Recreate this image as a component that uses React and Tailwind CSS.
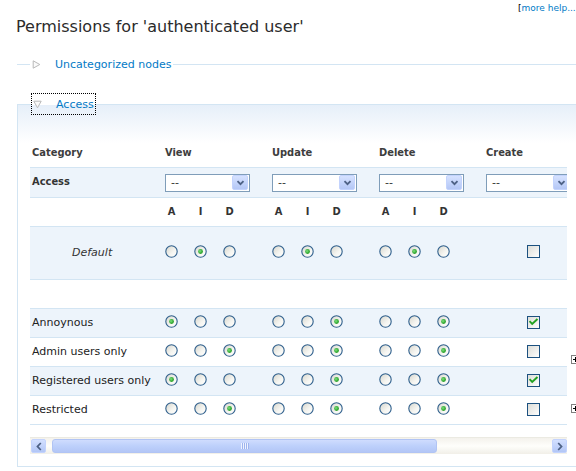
import React from 'react';

const rows = [
  { name: 'Annoynous', view: 0, create: true, odd: true },
  { name: 'Admin users only', view: 2, create: false, odd: false },
  { name: 'Registered users only', view: 0, create: true, odd: true },
  { name: 'Restricted', view: 2, create: false, odd: false },
];

const Radio = ({ checked }) => (
  <svg width="13" height="13" viewBox="0 0 13 13" className="block shrink-0">
    <defs>
      <linearGradient id="radioFill" x1="0" y1="0" x2="1" y2="1">
        <stop offset="0" stopColor="#d6d5cc" />
        <stop offset="0.6" stopColor="#f6f6f2" />
        <stop offset="1" stopColor="#ffffff" />
      </linearGradient>
      <radialGradient id="radioDot" cx="0.4" cy="0.4" r="0.6">
        <stop offset="0" stopColor="#7fe07f" />
        <stop offset="1" stopColor="#1d9a1d" />
      </radialGradient>
    </defs>
    <circle cx="6.5" cy="6.5" r="5.7" fill="url(#radioFill)" stroke="#2f5f8c" strokeWidth="1.1" />
    {checked && <circle cx="6.5" cy="6.5" r="2.4" fill="url(#radioDot)" />}
  </svg>
);

const Checkbox = ({ checked }) => (
  <svg width="13" height="13" viewBox="0 0 13 13" className="block shrink-0">
    <defs>
      <linearGradient id="boxFill" x1="0" y1="0" x2="1" y2="1">
        <stop offset="0" stopColor="#dcdcd6" />
        <stop offset="1" stopColor="#ffffff" />
      </linearGradient>
    </defs>
    <rect x="0.5" y="0.5" width="12" height="12" fill="url(#boxFill)" stroke="#1c5180" />
    {checked && (
      <path d="M3.2 5.8 L5.2 8 L9.8 3.6" stroke="#21a121" strokeWidth="1.9" fill="none" strokeLinecap="square" />
    )}
  </svg>
);

const Select = () => (
  <div className="flex h-[18px] w-[85px] shrink-0 items-center justify-between border border-[#7f9db9] bg-white pl-[5px] pr-[1px]">
    <span className="text-[11px] leading-none text-[#333]">--</span>
    <div className="flex h-[15px] w-[16px] items-center justify-center rounded-[2px] border border-[#c3d3fd] bg-gradient-to-b from-[#d6e2ff] to-[#b4c7f6]">
      <svg width="9" height="6" viewBox="0 0 9 6">
        <path d="M1.5 1.2 L4.5 4.2 L7.5 1.2" stroke="#4d6185" strokeWidth="1.8" fill="none" />
      </svg>
    </div>
  </div>
);

const RadioGroup = ({ value }) => (
  <div className="mb-[4px] flex w-[107px] shrink-0 gap-[16px]">
    {[0, 1, 2].map((i) => (
      <Radio key={i} checked={i === value} />
    ))}
  </div>
);

const Legend = ({ label, open }) => (
  <legend
    className={`ml-[1px] flex h-[22px] items-center border pl-[1px] pr-[1px] ${
      open ? 'border-dotted border-black' : 'border-transparent'
    }`}
  >
    <svg width="9" height="9" viewBox="0 0 9 9" className="mr-[14px]">
      {open ? (
        <path d="M0.8 1.2 H8.2 L4.5 7.8 Z" fill="#fafafa" stroke="#b9b9b9" />
      ) : (
        <path d="M1.2 0.8 V8.2 L7.8 4.5 Z" fill="#fafafa" stroke="#b9b9b9" />
      )}
    </svg>
    <a href="#" className="text-[11px] leading-none text-[#027ac6]">
      {label}
    </a>
  </legend>
);

const ScrollBtn = ({ dir }) => (
  <div className="flex h-full w-[15px] shrink-0 items-center justify-center rounded-[2px] border border-[#c3d3fd] bg-gradient-to-b from-[#d3e0ff] to-[#b2c6f6]">
    <svg width="6" height="9" viewBox="0 0 6 9">
      <path
        d={dir === 'left' ? 'M4.8 1 L1.5 4.5 L4.8 8' : 'M1.2 1 L4.5 4.5 L1.2 8'}
        stroke="#4d6185"
        strokeWidth="1.8"
        fill="none"
      />
    </svg>
  </div>
);

const PlusBox = () => (
  <div className="flex h-[9px] w-[9px] items-center justify-center border border-[#808080] bg-white">
    <svg width="7" height="7" viewBox="0 0 7 7">
      <path d="M1 3.5 H6 M3.5 1 V6" stroke="#000" strokeWidth="1" />
    </svg>
  </div>
);

const bold = "font-['DejaVu_Sans_Condensed','DejaVu_Sans',sans-serif] font-bold";

export default function App() {
  return (
    <div className="h-[471px] w-[576px] overflow-hidden bg-white font-['DejaVu_Sans',sans-serif] text-[#333]">
      <div className="w-[600px]">
        <div className="flex pl-[518px] pt-[1px] text-[9px] leading-[14px] whitespace-nowrap">
          <span className="text-black">[</span>
          <a href="#" className="text-[#027ac6]">more help...</a>
        </div>

        <h2 className="ml-[16px] mt-[2px] text-[16px] font-normal leading-[20px] text-[#2b2b2b]">
          Permissions for 'authenticated user'
        </h2>

        <fieldset className="ml-[17px] mt-[16px] border-0 border-t border-[#d3e5f3] pl-[12px]">
          <Legend label="Uncategorized nodes" />
        </fieldset>

        <fieldset className="ml-[17px] mt-[18px] border border-r-0 border-[#d3e5f3] bg-[linear-gradient(#e6eff9,#ffffff_38px)] pb-[12px] pl-[12px] pt-[24px]">
          <Legend label="Access" open />

          <div className="flex">
            <div className="w-[537px] shrink-0">
              <div className="w-[537px] overflow-hidden">
                <div className="w-[706px] text-[11px]">
                  {/* header */}
                  <div className={`flex h-[29px] items-center border-b border-[#d3e5f3] text-[11px] text-[#3d3d3d] ${bold}`}>
                    <div className="w-[135px] shrink-0 pl-[2px]">Category</div>
                    <div className="w-[107px] shrink-0">View</div>
                    <div className="w-[107px] shrink-0">Update</div>
                    <div className="w-[107px] shrink-0">Delete</div>
                    <div className="w-[94px] shrink-0">Create</div>
                  </div>

                  {/* access selects */}
                  <div className="flex h-[30px] items-center border-b border-[#d3e5f3] bg-[#edf4fb]">
                    <div className={`w-[135px] shrink-0 pl-[2px] text-[#333] ${bold}`}>Access</div>
                    <div className="w-[107px] shrink-0"><Select /></div>
                    <div className="w-[107px] shrink-0"><Select /></div>
                    <div className="w-[107px] shrink-0"><Select /></div>
                    <div className="w-[94px] shrink-0"><Select /></div>
                  </div>

                  {/* A I D */}
                  <div className={`flex h-[29px] items-center border-b border-[#d3e5f3] text-[#333] ${bold}`}>
                    <div className="w-[135px] shrink-0" />
                    {['v', 'u', 'd'].map((g) => (
                      <div key={g} className="flex w-[107px] shrink-0 gap-[16px]">
                        <span className="w-[13px] text-center">A</span>
                        <span className="w-[13px] text-center">I</span>
                        <span className="w-[13px] text-center">D</span>
                      </div>
                    ))}
                  </div>

                  {/* default */}
                  <div className="flex h-[53px] items-center border-b border-[#d3e5f3] bg-[#edf4fb]">
                    <div className="w-[135px] shrink-0 pl-[42px] italic text-[#333]">Default</div>
                    <RadioGroup value={1} />
                    <RadioGroup value={1} />
                    <RadioGroup value={1} />
                    <div className="mb-[3px] flex w-[94px] shrink-0 justify-center">
                      <Checkbox />
                    </div>
                  </div>

                  {/* spacer */}
                  <div className="h-[29px] border-b border-[#d3e5f3]" />

                  {rows.map((r) => (
                    <div
                      key={r.name}
                      className={`flex h-[29px] items-center border-b border-[#d3e5f3] ${r.odd ? 'bg-[#edf4fb]' : 'bg-white'}`}
                    >
                      <div className="w-[135px] shrink-0 whitespace-nowrap pl-[2px] text-[#222]">{r.name}</div>
                      <RadioGroup value={r.view} />
                      <RadioGroup value={2} />
                      <RadioGroup value={2} />
                      <div className="mb-[2px] flex w-[94px] shrink-0 justify-center">
                        <Checkbox checked={r.create} />
                      </div>
                    </div>
                  ))}
                </div>
              </div>

              {/* horizontal scrollbar */}
              <div className="mt-[12px] flex h-[17px] items-stretch border-t border-[#ebeae2] bg-gradient-to-b from-[#f4f2ec] via-[#fefefb] to-[#f1efe8] py-[1px] pl-[1px]">
                <ScrollBtn dir="left" />
                <div className="ml-[6px] flex w-[385px] shrink-0 items-center justify-center rounded-[3px] border border-[#b1c4f4] bg-gradient-to-b from-[#cfdcfe] via-[#bdd0fb] to-[#b3c6f6]">
                  <svg width="8" height="6" viewBox="0 0 8 6">
                    <path d="M0.5 0 V6 M2.5 0 V6 M4.5 0 V6 M6.5 0 V6" stroke="#eef3ff" strokeWidth="1" />
                    <path d="M1.5 0 V6 M3.5 0 V6 M5.5 0 V6 M7.5 0 V6" stroke="#9db4ee" strokeWidth="1" />
                  </svg>
                </div>
                <div className="flex-1" />
                <ScrollBtn dir="right" />
              </div>
            </div>

            <div className="ml-[4px] flex flex-col gap-[40px] pt-[216px]">
              <PlusBox />
              <PlusBox />
            </div>
          </div>
        </fieldset>
      </div>
    </div>
  );
}
